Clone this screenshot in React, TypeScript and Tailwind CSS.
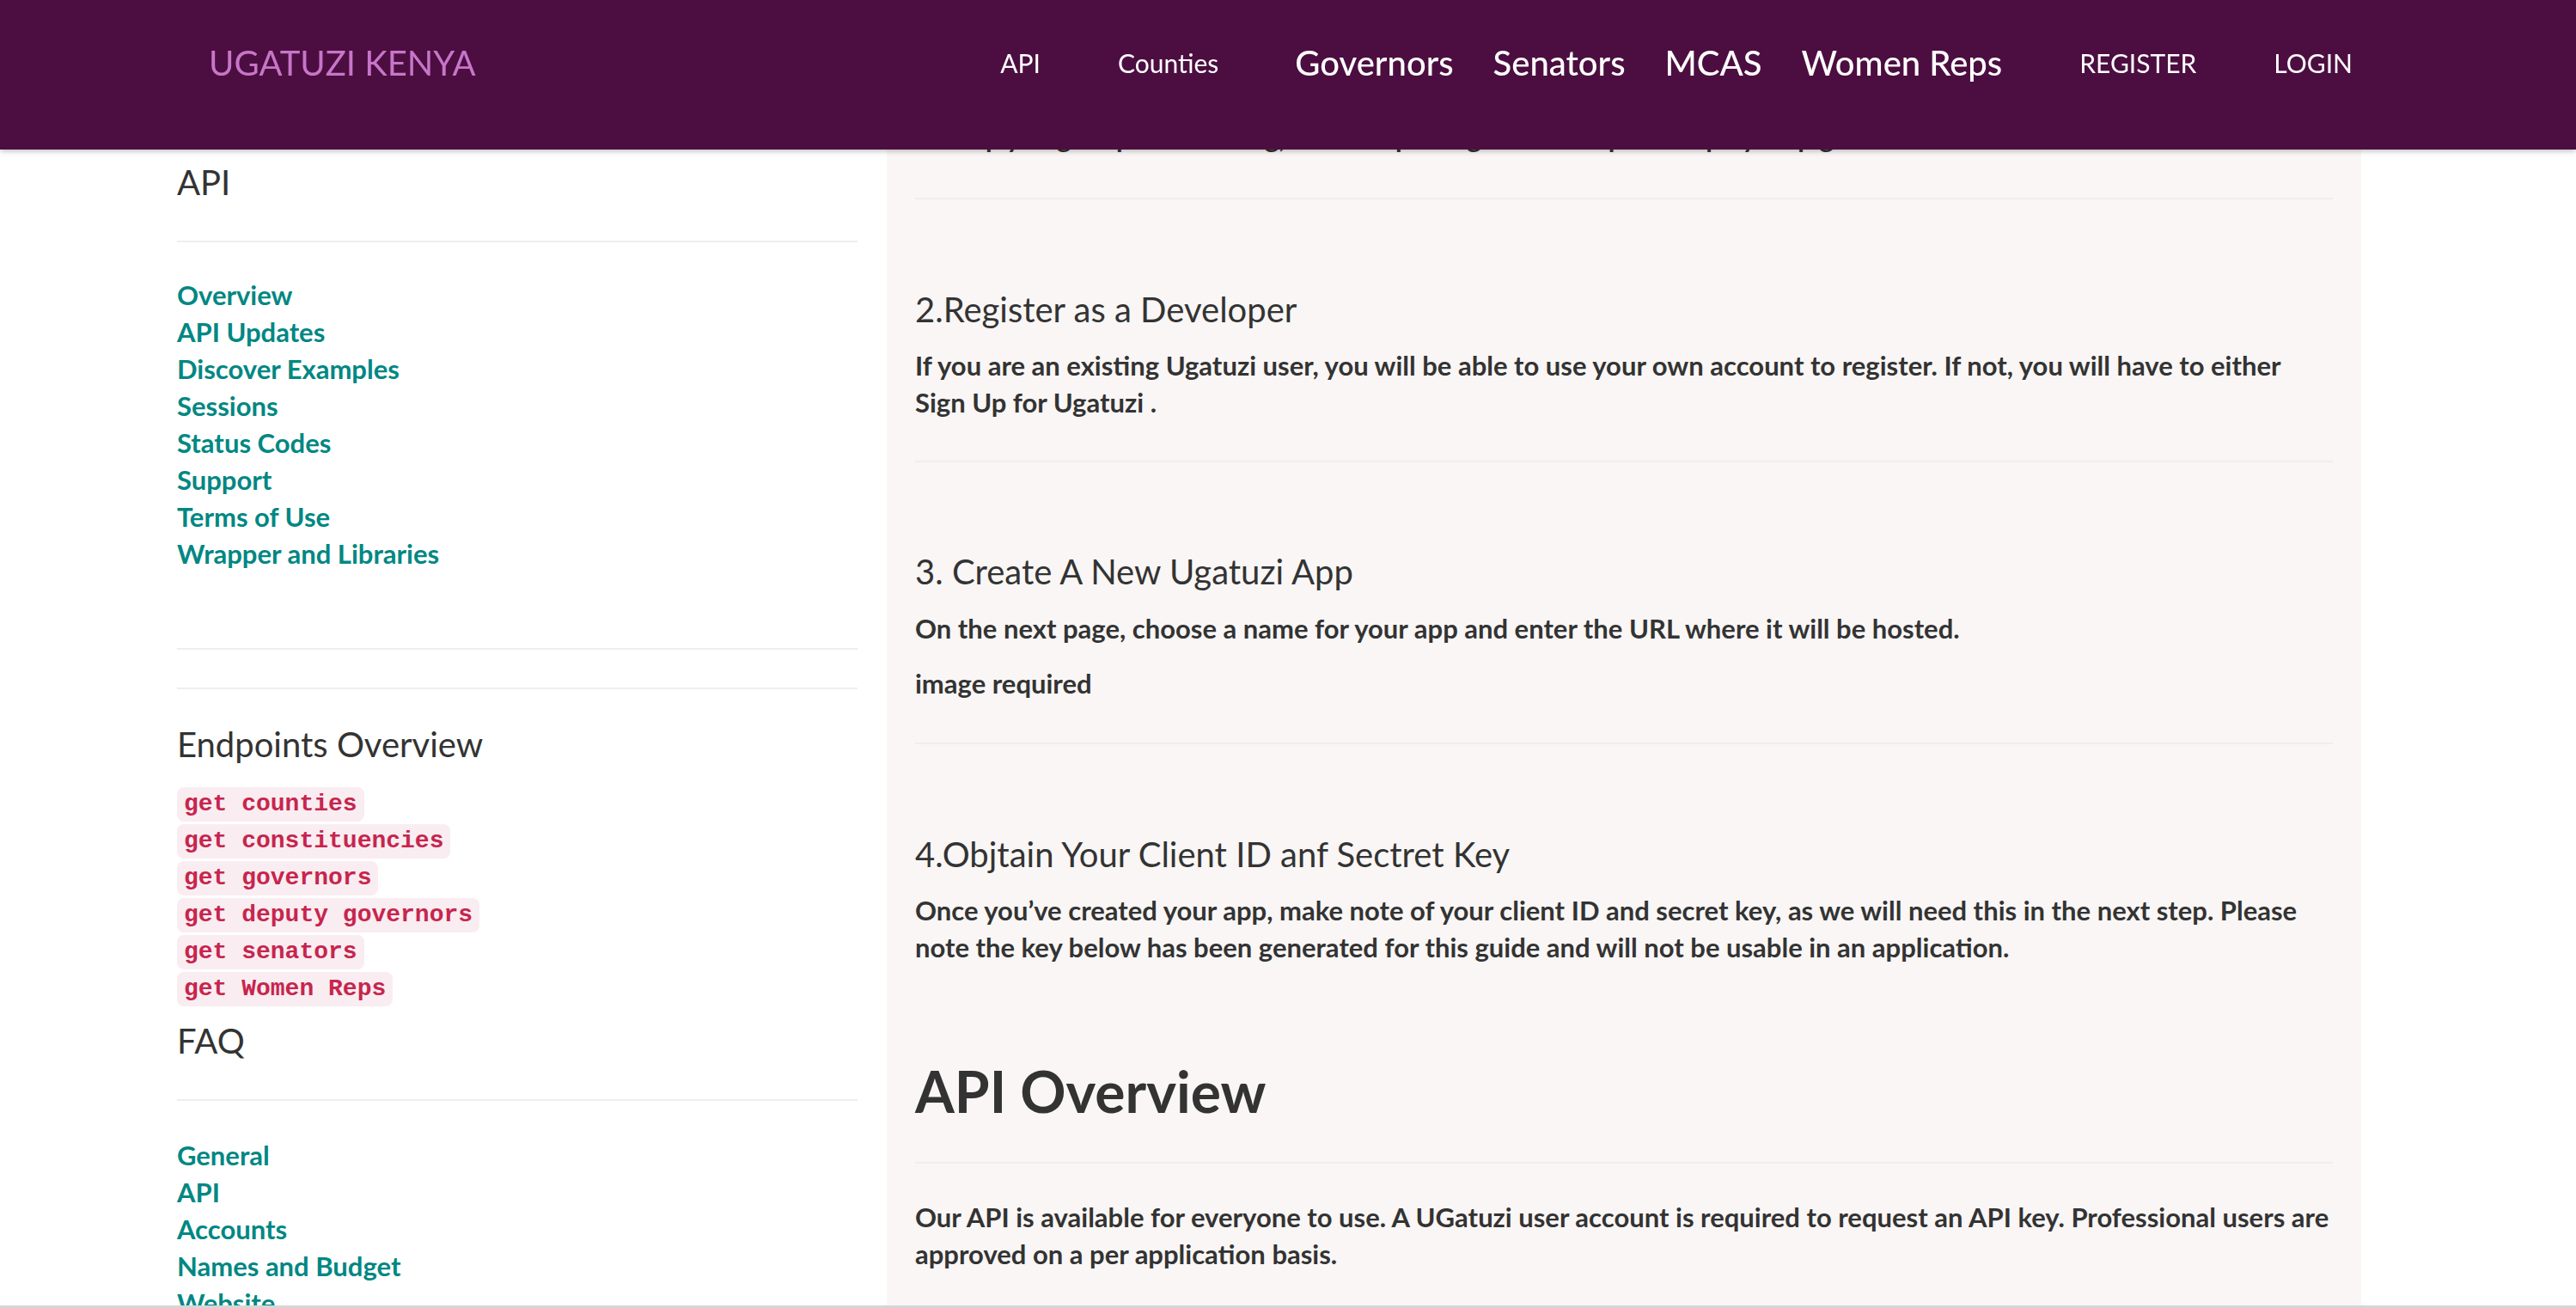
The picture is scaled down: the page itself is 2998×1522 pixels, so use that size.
import React from 'react';

const navSmall = ['API', 'Counties'];
const navBig = ['Governors', 'Senators', 'MCAS', 'Women Reps'];
const navAuth = ['REGISTER', 'LOGIN'];

const apiLinks = [
  'Overview',
  'API Updates',
  'Discover Examples',
  'Sessions',
  'Status Codes',
  'Support',
  'Terms of Use',
  'Wrapper and Libraries',
];

const endpoints = [
  'get counties',
  'get constituencies',
  'get governors',
  'get deputy governors',
  'get senators',
  'get Women Reps',
];

const faqLinks = ['General', 'API', 'Accounts', 'Names and Budget', 'Website'];

function Divider({ className = '' }: { className?: string }) {
  return <div className={`h-[2px] bg-[#eeeeee] ${className}`} />;
}

function Navbar() {
  return (
    <header className="fixed top-0 left-0 right-0 z-20 h-[174px] bg-[#4c0e40] shadow-[0_2px_6px_rgba(0,0,0,0.25)]">
      <div className="flex h-[146px] items-center pl-[243px] pr-[260px]">
        <a className="text-[40px] leading-none text-[#c775c9]">UGATUZI KENYA</a>
        <nav className="ml-auto flex items-center text-white">
          {navSmall.map((item, i) => (
            <a key={item} className={`text-[30px] leading-none ${i > 0 ? 'ml-[90px]' : ''}`}>
              {item}
            </a>
          ))}
          {navBig.map((item, i) => (
            <a key={item} className={`text-[40px] font-medium leading-none ${i > 0 ? 'ml-[46px]' : 'ml-[89px]'}`}>
              {item}
            </a>
          ))}
          {navAuth.map((item) => (
            <a key={item} className="ml-[90px] text-[30px] leading-none">
              {item}
            </a>
          ))}
        </nav>
      </div>
    </header>
  );
}

function Sidebar() {
  return (
    <aside className="w-[792px] shrink-0 pt-[188px] text-[#333333]">
      <h3 className="text-[40px] leading-[48px]">API</h3>
      <Divider className="mt-[44px]" />
      <ul className="mt-[40px]">
        {apiLinks.map((l) => (
          <li key={l} className="text-[31px] font-bold leading-[43px] text-[#008783]">
            {l}
          </li>
        ))}
      </ul>
      <Divider className="mt-[88px]" />
      <Divider className="mt-[44px]" />
      <h3 className="mt-[40px] text-[40px] leading-[48px]">Endpoints Overview</h3>
      <ul className="mt-[26px] flex flex-col items-start gap-[3px]">
        {endpoints.map((e) => (
          <li key={e}>
            <code className="block h-[40px] rounded-[8px] bg-[#f9edf1] px-[8px] font-['Liberation_Mono',monospace] text-[28px] font-bold leading-[40px] text-[#c7254e]">
              {e}
            </code>
          </li>
        ))}
      </ul>
      <h3 className="mt-[16px] text-[40px] leading-[48px]">FAQ</h3>
      <Divider className="mt-[44px]" />
      <ul className="mt-[42px]">
        {faqLinks.map((l) => (
          <li key={l} className="text-[31px] font-bold leading-[43px] text-[#008783]">
            {l}
          </li>
        ))}
      </ul>
    </aside>
  );
}

function MainContent() {
  const p = 'text-[31px] font-bold leading-[43px] text-[#333333]';
  const h = 'text-[40px] leading-[43px] text-[#333333]';
  return (
    <main className="ml-[34px] w-[1716px] shrink-0 bg-[#f9f6f5] px-[33px] pt-[139px]">
      <p className={p}>
        To help you get up and running, we have put together this quick step by step guide.
      </p>
      <Divider className="mt-[48px]" />

      <h2 className={`mt-[107px] ${h}`}>2.Register as a Developer</h2>
      <p className={`mt-[22px] ${p}`}>
        If you are an existing Ugatuzi user, you will be able to use your own account to register. If not, you will
        have to either Sign Up for Ugatuzi .
      </p>
      <Divider className="mt-[46px]" />

      <h2 className={`mt-[106px] ${h}`}>3. Create A New Ugatuzi App</h2>
      <p className={`mt-[23px] ${p}`}>
        On the next page, choose a name for your app and enter the URL where it will be hosted.
      </p>
      <p className={`mt-[21px] ${p}`}>image required</p>
      <Divider className="mt-[47px]" />

      <h2 className={`mt-[107px] ${h}`}>4.Objtain Your Client ID anf Sectret Key</h2>
      <p className={`mt-[22px] ${p}`}>
        Once you’ve created your app, make note of your client ID and secret key, as we will need this in the next
        step. Please note the key below has been generated for this guide and will not be usable in an application.
      </p>

      <h1 className="mt-[107px] text-[66px] font-bold leading-[77px] text-[#333333]">API Overview</h1>
      <Divider className="mt-[44px]" />
      <p className={`mt-[41px] ${p}`}>
        Our API is available for everyone to use. A UGatuzi user account is required to request an API key.
        Professional users are approved on a per application basis.
      </p>
      <div className="h-[80px]" />
    </main>
  );
}

export default function App() {
  return (
    <div className="relative h-[1522px] w-full overflow-hidden bg-white font-['Lato','Noto_Sans',sans-serif]">
      <Navbar />
      <div className="flex pl-[206px]">
        <Sidebar />
        <MainContent />
      </div>
      <div className="fixed bottom-0 left-0 right-0 z-30 h-[3px] bg-[#d6d6d6]" />
    </div>
  );
}
